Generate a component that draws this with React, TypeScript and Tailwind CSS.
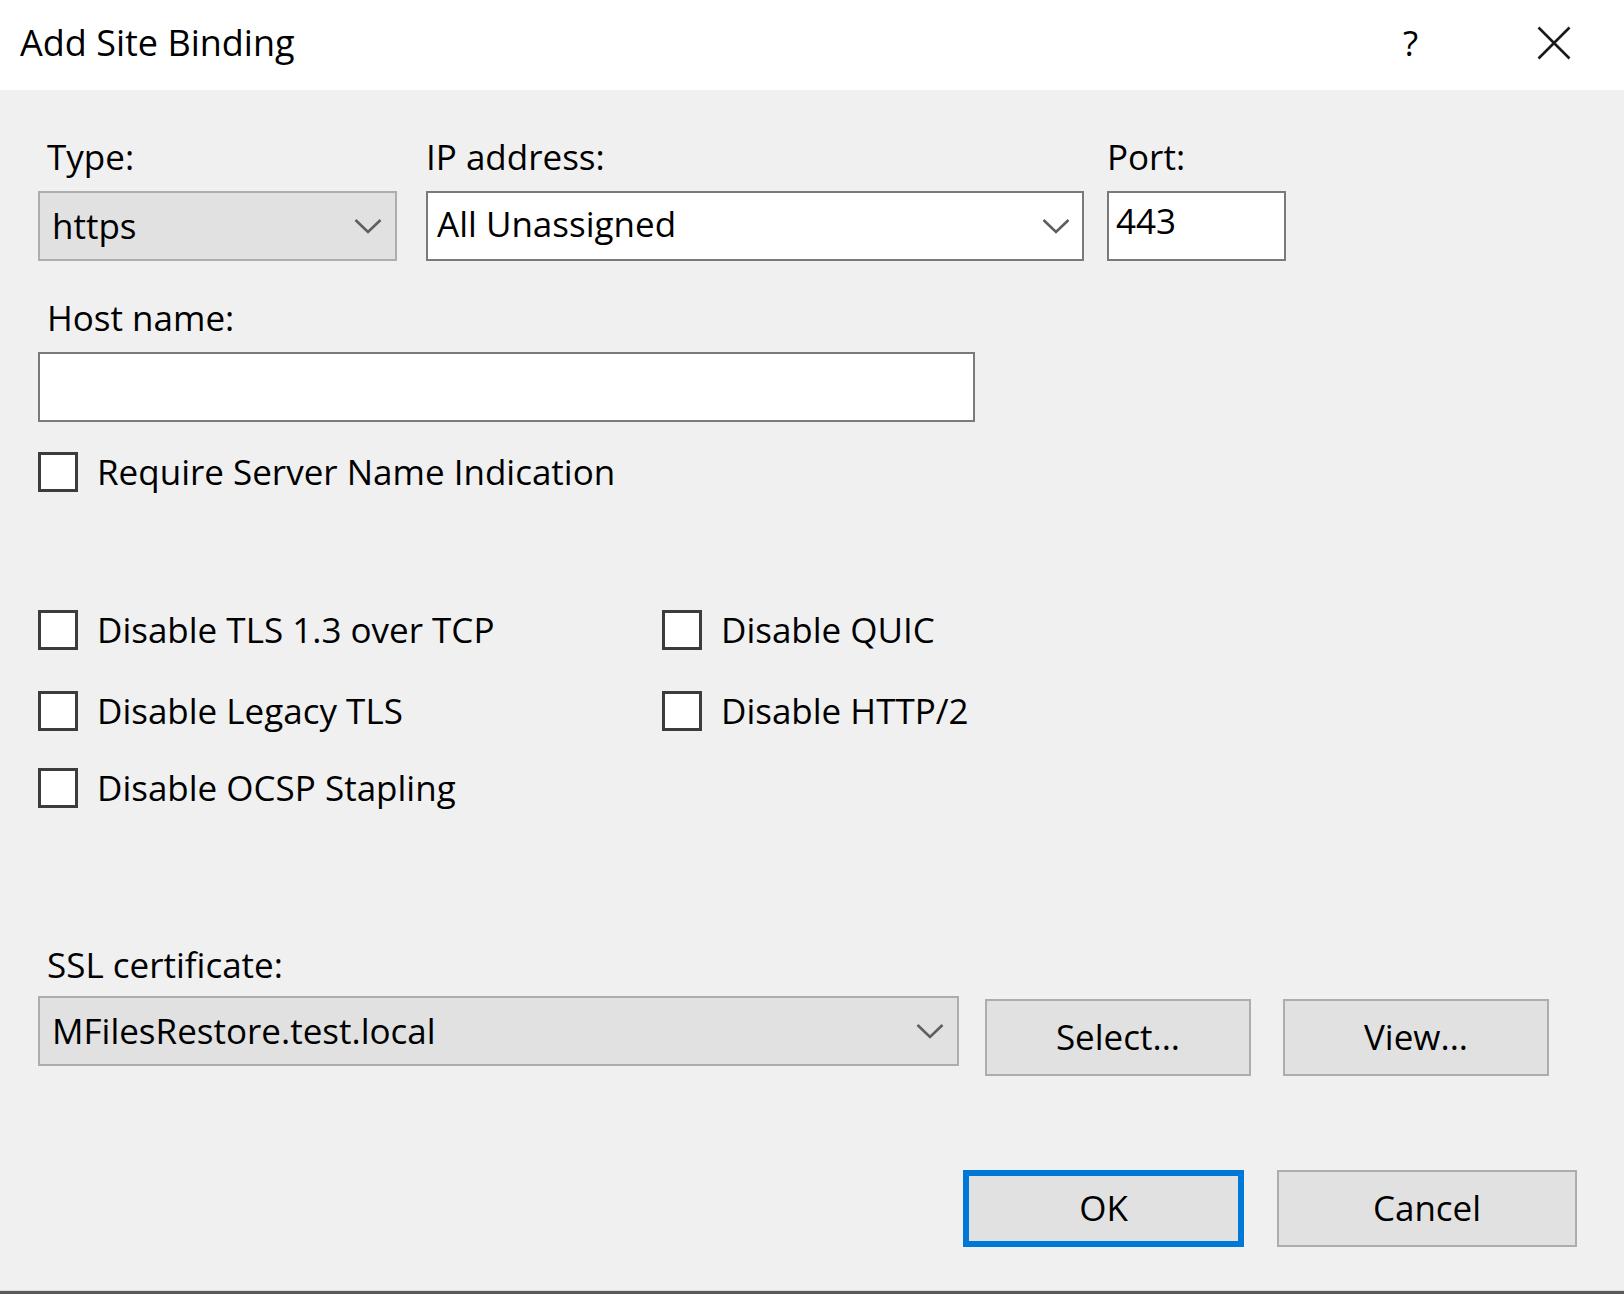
import React from "react";

function Chevron({ className = "" }: { className?: string }) {
  return (
    <svg width="28" height="16" viewBox="0 0 28 16" className={className}>
      <path d="M1.5 2 L14 14 L26.5 2" fill="none" stroke="#5f5f5f" strokeWidth="2.6" />
    </svg>
  );
}

function Check({ label }: { label: string }) {
  return (
    <div className="flex items-center h-[40px]">
      <div className="w-[40px] h-[40px] border-[3px] border-[#3c3c3c] bg-white shrink-0" />
      <span className="ml-[19px] leading-[40px] whitespace-nowrap">{label}</span>
    </div>
  );
}

export default function App() {
  return (
    <div className="w-[1624px] h-[1294px] bg-[#f0f0f0] text-black font-['Open_Sans',sans-serif] text-[35px] flex flex-col overflow-hidden">
      {/* Title bar */}
      <div className="h-[90px] bg-white flex items-center shrink-0">
        <div className="ml-[20px] flex-1 leading-[46px] pb-[4px] text-[36px]">Add Site Binding</div>
        <div className="w-[20px] mr-[114px] leading-[46px] text-[35px] pb-[4px]">?</div>
        <svg width="34" height="34" viewBox="0 0 34 34" className="mr-[53px] mb-[4px]">
          <path d="M1.5 1.5 L32.5 32.5 M32.5 1.5 L1.5 32.5" stroke="#1a1a1a" strokeWidth="2.6" fill="none" />
        </svg>
      </div>

      {/* Body */}
      <div className="flex flex-col pl-[38px] flex-1">
        {/* Row 1 */}
        <div className="flex mt-[44px]">
          <div className="flex flex-col w-[359px]">
            <div className="leading-[46px] ml-[9px]">Type:</div>
            <div className="mt-[11px] h-[70px] bg-[#e1e1e1] border-2 border-[#adadad] flex items-center justify-between pl-[12px] pr-[13px]">
              <span>https</span>
              <Chevron />
            </div>
          </div>
          <div className="flex flex-col w-[658px] ml-[29px]">
            <div className="leading-[46px]">IP address:</div>
            <div className="mt-[11px] h-[70px] bg-white border-2 border-[#7a7a7a] flex items-center justify-between pl-[9px] pr-[12px]">
              <span className="-mt-[4px]">All Unassigned</span>
              <Chevron />
            </div>
          </div>
          <div className="flex flex-col w-[179px] ml-[23px]">
            <div className="leading-[46px]">Port:</div>
            <div className="mt-[11px] h-[70px] bg-white border-2 border-[#7a7a7a] flex items-center pl-[7px]">
              <span className="-mt-[10px]">443</span>
            </div>
          </div>
        </div>

        {/* Host name */}
        <div className="leading-[46px] ml-[9px] mt-[34px]">Host name:</div>
        <div className="mt-[11px] h-[70px] w-[937px] bg-white border-2 border-[#7a7a7a]" />

        {/* SNI */}
        <div className="mt-[30px]">
          <Check label="Require Server Name Indication" />
        </div>

        {/* Options grid */}
        <div className="mt-[118px] flex flex-col w-fit">
          <div className="grid grid-cols-[624px_auto]">
            <Check label="Disable TLS 1.3 over TCP" />
            <Check label="Disable QUIC" />
          </div>
          <div className="grid grid-cols-[624px_auto] mt-[41px]">
            <Check label="Disable Legacy TLS" />
            <Check label="Disable HTTP/2" />
          </div>
          <div className="grid grid-cols-[624px_auto] mt-[37px]">
            <Check label="Disable OCSP Stapling" />
          </div>
        </div>

        {/* SSL certificate */}
        <div className="leading-[46px] ml-[9px] mt-[134px]">SSL certificate:</div>
        <div className="mt-[8px] flex items-start">
          <div className="w-[921px] h-[70px] bg-[#e1e1e1] border-2 border-[#adadad] flex items-center justify-between pl-[12px] pr-[13px]">
            <span>MFilesRestore.test.local</span>
            <Chevron />
          </div>
          <button className="ml-[26px] mt-[3px] w-[266px] h-[77px] bg-[#e1e1e1] border-2 border-[#adadad] flex items-center justify-center">
            Select...
          </button>
          <button className="ml-[32px] mt-[3px] w-[266px] h-[77px] bg-[#e1e1e1] border-2 border-[#adadad] flex items-center justify-center">
            View...
          </button>
        </div>

        {/* OK / Cancel */}
        <div className="mt-[94px] flex ml-[925px]">
          <button className="w-[281px] h-[77px] bg-[#e1e1e1] border-[6px] border-[#0078d7] flex items-center justify-center">
            OK
          </button>
          <button className="ml-[33px] w-[300px] h-[77px] bg-[#e1e1e1] border-2 border-[#adadad] flex items-center justify-center">
            Cancel
          </button>
        </div>
      </div>
      <div className="h-[1px] bg-[#dcdcdc] shrink-0" />
      <div className="h-[3px] bg-[#5a5a5a] shrink-0" />
    </div>
  );
}
